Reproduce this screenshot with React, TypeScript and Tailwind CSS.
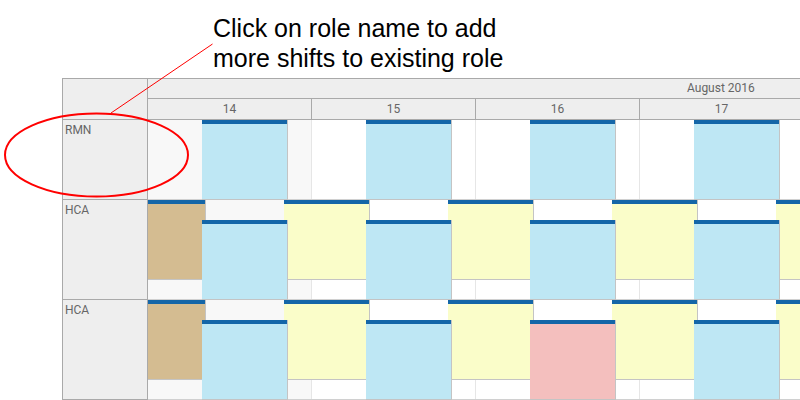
import React from "react";

type Ev = { left: number; lane: 0 | 1; color: string };

const DAY = 164;
const EW = 86;
const days = ["14", "15", "16", "17"];

function hcaEvents(pinkDay: number | null): Ev[] {
  const list: Ev[] = [{ left: -28, lane: 0, color: "#d4bc91" }];
  for (let d = 0; d < 4; d++) {
    list.push({ left: DAY * d + 136, lane: 0, color: "#fafdc9" });
  }
  for (let d = 0; d < 4; d++) {
    list.push({ left: DAY * d + 54, lane: 1, color: d === pinkDay ? "#f4bfbe" : "#bee7f4" });
  }
  return list;
}

const rows: { name: string; h: number; events: Ev[] }[] = [
  {
    name: "RMN",
    h: 80,
    events: [0, 1, 2, 3].map((d) => ({ left: DAY * d + 54, lane: 0 as const, color: "#bee7f4" })),
  },
  { name: "HCA", h: 100, events: hcaEvents(null) },
  { name: "HCA", h: 100, events: hcaEvents(2) },
];

const font = { fontFamily: "Roboto, 'Liberation Sans', sans-serif" };

export default function App() {
  return (
    <div className="relative w-[800px] h-[400px] overflow-hidden bg-white">
      <div
        className="h-[78px] pl-[213px] pt-[13px] text-[25px] leading-[30px] text-black"
        style={{ fontFamily: "'Liberation Sans', Arial, sans-serif" }}
      >
        <div>Click on role name to add</div>
        <div>more shifts to existing role</div>
      </div>

      <div className="flex pl-[62px] text-[12px] text-[#666666]" style={font}>
        {/* left column */}
        <div className="w-[86px] shrink-0 border-l border-r border-[#a9a9a9] bg-[#eeeeee]">
          <div className="h-[42px] border-t border-b border-[#a9a9a9]" />
          {rows.map((r, i) => (
            <div
              key={i}
              className="border-b border-[#a9a9a9] pl-[2px] pt-[3px] leading-[14px]"
              style={{ height: r.h }}
            >
              {r.name}
            </div>
          ))}
        </div>

        {/* grid */}
        <div className="w-[652px] shrink-0 overflow-hidden">
          <div className="w-[700px]">
            <div className="h-[21px] border-t border-b border-[#a9a9a9] bg-[#eeeeee] pl-[539px] leading-[19px]">
              August 2016
            </div>
            <div className="flex h-[21px] border-b border-[#a9a9a9] bg-[#eeeeee]">
              {days.map((d) => (
                <div
                  key={d}
                  className="w-[164px] shrink-0 border-r border-[#a9a9a9] text-center leading-[20px]"
                >
                  {d}
                </div>
              ))}
            </div>
            {rows.map((r, i) => (
              <div
                key={i}
                className="relative flex border-b border-[#d0d0d0]"
                style={{ height: r.h }}
              >
                {days.map((d, k) => (
                  <div
                    key={d}
                    className={
                      k === 0
                        ? "w-[164px] shrink-0 border-r border-[#e6e6e6] bg-[#f8f8f8]"
                        : "w-[164px] shrink-0 border-r border-[#e6e6e6] bg-white"
                    }
                  />
                ))}
                {r.events.map((e, j) => (
                  <div
                    key={j}
                    className="absolute h-[80px] border-r border-b border-[#c4c4c4]"
                    style={{
                      left: e.left,
                      width: EW,
                      top: e.lane === 0 ? 0 : 20,
                      backgroundColor: e.color,
                    }}
                  >
                    <div className="h-[4px] bg-[#1466a8]" />
                  </div>
                ))}
              </div>
            ))}
          </div>
        </div>
      </div>

      <svg
        className="pointer-events-none absolute left-0 top-0"
        width="800"
        height="400"
        viewBox="0 0 800 400"
      >
        <line x1="111" y1="113" x2="212.5" y2="44" stroke="#ff0000" strokeWidth="1" />
        <ellipse cx="96.5" cy="155" rx="91.5" ry="41.5" fill="none" stroke="#ff0000" strokeWidth="2" />
      </svg>
    </div>
  );
}
